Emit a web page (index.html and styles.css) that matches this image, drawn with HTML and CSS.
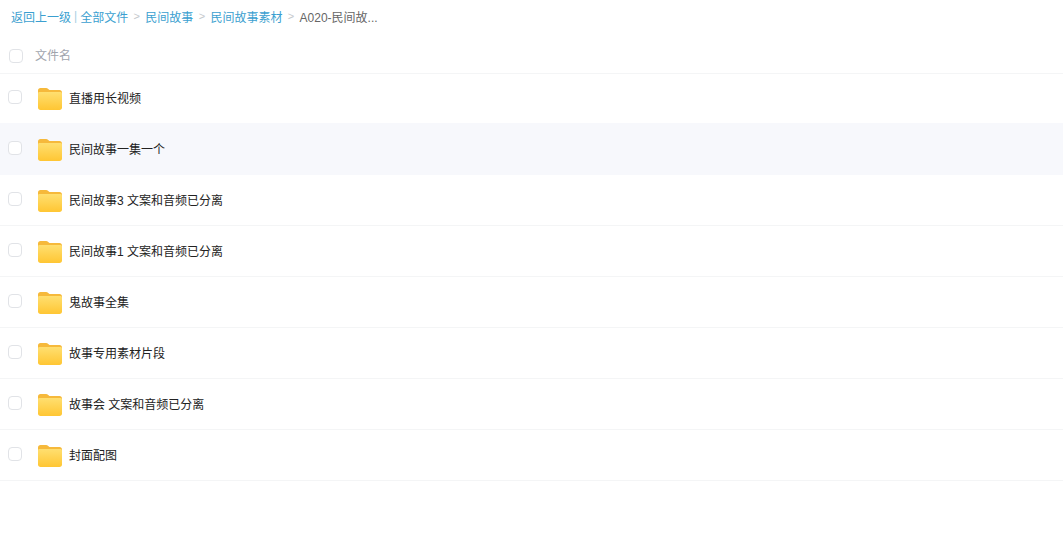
FILE: index.html
```html
<!DOCTYPE html>
<html lang="zh-CN">
<head>
    <meta charset="UTF-8">
    <meta name="viewport" content="width=device-width, initial-scale=1.0">
    <title>文件列表</title>
    <link rel="stylesheet" href="styles.css">
</head>
<body>
    <svg class="svg-defs" width="0" height="0">
        <defs>
            <linearGradient id="folder-front" x1="0" y1="0" x2="0" y2="1">
                <stop offset="0" stop-color="#ffdf70"/>
                <stop offset="1" stop-color="#ffc633"/>
            </linearGradient>
            <symbol id="folder" viewBox="0 0 24 22">
                <path d="M0 2.500C0 1 1 0 2.500 0H8c1 0 1.600.4 2.200 1L11.500 2H21.500C23 2 24 3 24 4.500V10H0Z" fill="#f6b93b"/>
                <path d="M0 5.500C0 4.700.6 4 1.400 4H22.600C23.400 4 24 4.700 24 5.500V19.500C24 21 23 22 21.500 22H2.500C1 22 0 21 0 19.500Z" fill="url(#folder-front)"/>
            </symbol>
        </defs>
    </svg>

    <div class="crumbs">
        <a class="crumb-link">返回上一级</a>
        <span class="crumb-bar">|</span>
        <a class="crumb-link">全部文件</a>
        <span class="crumb-sep">&gt;</span>
        <a class="crumb-link">民间故事</a>
        <span class="crumb-sep">&gt;</span>
        <a class="crumb-link">民间故事素材</a>
        <span class="crumb-sep">&gt;</span>
        <span class="crumb-current">A020-民间故...</span>
    </div>

    <div class="list-head">
        <span class="check check-head"></span>
        <span class="head-name">文件名</span>
    </div>

    <ul class="file-list">
        <li class="file-row"><span class="check"></span><svg class="folder-icon"><use href="#folder"/></svg><span class="file-name">直播用长视频</span></li>
        <li class="file-row is-hover"><span class="check"></span><svg class="folder-icon"><use href="#folder"/></svg><span class="file-name">民间故事一集一个</span></li>
        <li class="file-row"><span class="check"></span><svg class="folder-icon"><use href="#folder"/></svg><span class="file-name">民间故事3 文案和音频已分离</span></li>
        <li class="file-row"><span class="check"></span><svg class="folder-icon"><use href="#folder"/></svg><span class="file-name">民间故事1 文案和音频已分离</span></li>
        <li class="file-row"><span class="check"></span><svg class="folder-icon"><use href="#folder"/></svg><span class="file-name">鬼故事全集</span></li>
        <li class="file-row"><span class="check"></span><svg class="folder-icon"><use href="#folder"/></svg><span class="file-name">故事专用素材片段</span></li>
        <li class="file-row"><span class="check"></span><svg class="folder-icon"><use href="#folder"/></svg><span class="file-name">故事会 文案和音频已分离</span></li>
        <li class="file-row"><span class="check"></span><svg class="folder-icon"><use href="#folder"/></svg><span class="file-name">封面配图</span></li>
    </ul>
</body>
</html>
```

FILE: styles.css
```css
body {
    margin: 0;
    background-color: #fff;
    font-family: "Liberation Sans", "Noto Sans CJK SC", sans-serif;
    font-size: 12px;
    color: #333;
    overflow: hidden;
}
.svg-defs {
    display: block;
    height: 0;
}
.crumbs {
    display: flex;
    align-items: center;
    height: 32px;
    padding-left: 11px;
    white-space: pre;
}
.crumb-link {
    color: #3b9fd0;
}
.crumb-bar {
    margin: 0 3px;
    color: #a9cfe3;
}
.crumb-sep {
    margin: 0 5.35px;
    color: #c4c8cc;
    font-size: 11px;
}
.crumb-current {
    color: #666;
}
.list-head {
    display: flex;
    align-items: center;
    height: 41px;
    border-bottom: 1px solid #f4f5f6;
    color: #a0a4ad;
}
.check {
    flex: none;
    box-sizing: border-box;
    width: 14px;
    height: 14px;
    margin-left: 8px;
    margin-top: -3px;
    border: 1px solid #e1e3e7;
    border-radius: 4px;
    background-color: #fff;
}
.check-head {
    margin-left: 9px;
    margin-top: 7px;
}
.head-name {
    margin-left: 12px;
    margin-top: 4px;
}
/* the first row sits under the header line */
.file-list {
    margin: -1px 0 0;
    padding: 0;
    list-style: none;
}
.file-row {
    display: flex;
    align-items: center;
    box-sizing: border-box;
    height: 51px;
    border-bottom: 1px solid #f4f5f6;
}
.file-row.is-hover {
    background-color: #f7f8fc;
    border-bottom-color: #f7f8fc;
    box-shadow: 0 -1px 0 #f7f8fc;
}
.folder-icon {
    flex: none;
    width: 24px;
    height: 22px;
    margin-left: 16px;
    margin-top: 1px;
}
.file-name {
    margin-left: 7px;
    margin-top: -1px;
    color: #222;
}
```
